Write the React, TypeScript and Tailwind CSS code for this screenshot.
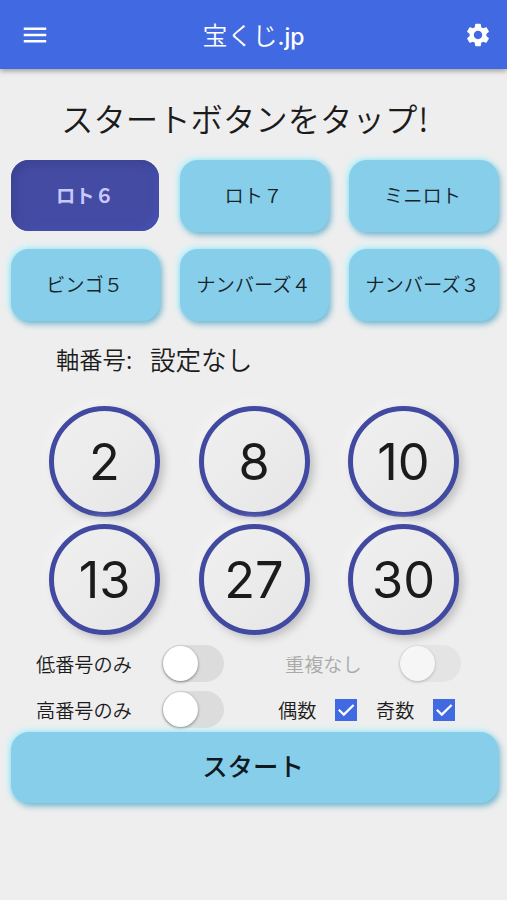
import { useState } from "react";
import { MdMenu, MdSettings } from "react-icons/md";
import clsx from "clsx";

const games = ["ロト６", "ロト７", "ミニロト", "ビンゴ５", "ナンバーズ４", "ナンバーズ３"];
const numbers = [2, 8, 10, 13, 27, 30];

const raised = "bg-[#87ceeb] shadow-[2px_3px_6px_#6fb4ce,-2px_-2px_6px_#b4f4ff]";

interface ToggleProps {
  on: boolean;
  onToggle?: () => void;
  disabled?: boolean;
}

function Toggle({ on, onToggle, disabled }: ToggleProps) {
  return (
    <button
      role="switch"
      aria-checked={on}
      disabled={disabled}
      onClick={onToggle}
      className={clsx(
        "flex h-[37px] w-[62px] shrink-0 items-center rounded-full px-px",
        on ? "justify-end bg-[#4169e1]" : "justify-start bg-[#dcdcdc]",
        disabled && "opacity-50"
      )}
    >
      <span className="size-[35px] rounded-full bg-white shadow-[0_1px_3px_rgba(0,0,0,0.45)]" />
    </button>
  );
}

function Check({ on, onToggle }: ToggleProps) {
  return (
    <button
      role="checkbox"
      aria-checked={on}
      onClick={onToggle}
      className={clsx("size-[22px] shrink-0", on ? "bg-[#4169e1]" : "border-2 border-[#4169e1]")}
    >
      {on && (
        <svg viewBox="0 0 22 22" fill="none" stroke="white" strokeWidth="2.2">
          <path d="M3.8 10.8 8.8 15.6 18.6 6" />
        </svg>
      )}
    </button>
  );
}

export default function App() {
  const [game, setGame] = useState(0);
  const [low, setLow] = useState(false);
  const [high, setHigh] = useState(false);
  const [even, setEven] = useState(true);
  const [odd, setOdd] = useState(true);

  return (
    <div className="h-[900px] w-[507px] overflow-hidden bg-[#eeeeee] font-['Noto_Sans_CJK_JP',sans-serif] whitespace-nowrap text-[#1b1b1b]">
      <header className="flex h-[69px] items-center justify-between bg-[#4169e1] pr-[15px] pl-5 text-white shadow-[0_2px_5px_rgba(0,0,0,0.35)]">
        <MdMenu className="size-[30px]" />
        <h1 className="mr-[7px] flex items-baseline pt-px text-[25px] leading-[36px] font-[350]">
          宝くじ<span className="font-['Inter'] text-[23px] font-medium">.jp</span>
        </h1>
        <MdSettings className="size-[28px]" />
      </header>

      {/* Prompt */}
      <p className="mt-[25px] pl-[61px] text-[32.4px] leading-[48px] font-[350]">
        スタートボタンをタップ<span className="pl-px">!</span>
      </p>

      {/* Game picker */}
      <div className="mt-[18px] grid grid-cols-3 gap-x-5 gap-y-[17px] pr-[9px] pl-[11px]">
        {games.map((name, i) => (
          <button
            key={name}
            onClick={() => setGame(i)}
            className={clsx(
              "rounded-[18px] text-[19.3px]",
              i === game
                ? "mr-px mb-px h-[71px] bg-[#434ba2] font-bold text-[#c8c8ff] shadow-[inset_3px_3px_8px_#3b428f,inset_-3px_-3px_8px_#4a53b5]"
                : [raised, "h-[72px] pr-[2px] pb-[2px] font-[350] text-[#16242a]"]
            )}
          >
            {name}
          </button>
        ))}
      </div>

      <div className="mt-[19px] flex h-[39px] items-center pl-[56px] font-[350]">
        <span className="text-[23.3px]">軸番号</span>
        <span className="w-[24px] text-[23.3px]">:</span>
        <span className="text-[25.6px]">設定なし</span>
      </div>

      {/* Drawn numbers */}
      <div className="mt-[27px] grid grid-cols-[repeat(3,111px)] gap-x-[38.5px] gap-y-[7px] pl-[49px]">
        {numbers.map((n) => (
          <div
            key={n}
            className="flex size-[111px] items-center justify-center rounded-full border-[5px] border-[#4149a0] bg-[linear-gradient(135deg,#f0f0f0,#e6e6e6)] pt-px font-['Inter'] text-[50.5px] shadow-[4px_4px_8px_#c0c0c0,-4px_-4px_8px_#f3f3f3]"
          >
            {n}
          </div>
        ))}
      </div>

      {/* Options */}
      <div className="mt-[10px] flex h-[37px] items-center pl-[36px] text-[19.2px] font-[350]">
        <span className="w-[126px] pt-[2px]">低番号のみ</span>
        <Toggle on={low} onToggle={() => setLow(!low)} />
        <span className="ml-[61px] w-[114px] pt-[2px] text-[#a9a9a9]">重複なし</span>
        <Toggle on={false} disabled />
      </div>
      <div className="mt-[9px] flex h-[37px] items-center pl-[36px] text-[19.2px] font-[350]">
        <span className="w-[126px] pt-px">高番号のみ</span>
        <Toggle on={high} onToggle={() => setHigh(!high)} />
        <span className="ml-[54px] w-[57px] pt-px">偶数</span>
        <Check on={even} onToggle={() => setEven(!even)} />
        <span className="ml-[19px] w-[57px] pt-px">奇数</span>
        <Check on={odd} onToggle={() => setOdd(!odd)} />
      </div>

      <div className="mt-[4px] pr-[9px] pl-[11px]">
        <button className={clsx("h-[71px] w-full rounded-[18px] pr-[3px] pb-[4px] text-[25.4px] font-medium text-[#101a1e]", raised)}>
          スタート
        </button>
      </div>
    </div>
  );
}
